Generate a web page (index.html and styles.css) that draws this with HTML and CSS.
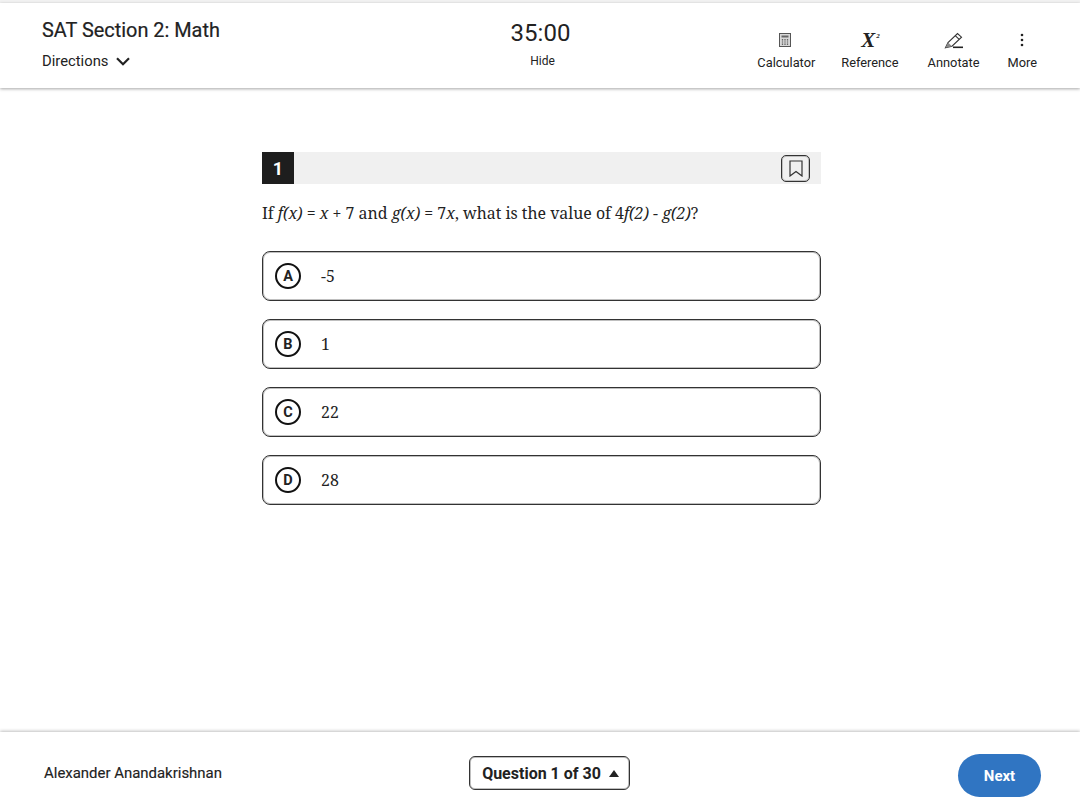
FILE: index.html
```html
<!DOCTYPE html>
<html lang="en">
<head>
<meta charset="utf-8">
<title>SAT Section 2: Math</title>
<link rel="stylesheet" href="styles.css">
</head>
<body>
<div class="page">
  <header class="topbar">
    <div class="left">
      <h1 class="section-title">SAT Section 2: Math</h1>
      <div class="directions">Directions
        <svg class="chev" width="14" height="9" viewBox="0 0 14 9"><path d="M1 1.2 7 7.2l6-6" fill="none" stroke="#222" stroke-width="2.2"/></svg>
      </div>
    </div>
    <div class="center">
      <div class="timer">35:00</div>
      <div class="hide">Hide</div>
    </div>
    <div class="tools">
      <div class="tool tool-calc">
        <svg class="tool-icon" width="24" height="24" viewBox="0 0 24 24"><rect x="5.5" y="5.5" width="11" height="13" fill="#d8d8d8" stroke="#555" stroke-width="1"/><rect x="7.5" y="7.5" width="7" height="2" fill="#666"/><path d="M8.5 11v6M11 11v6M13.5 11v6" stroke="#666" stroke-width="1.3"/><path d="M7 13h8M7 15h8" stroke="#d8d8d8" stroke-width=".8"/></svg>
        <span>Calculator</span>
      </div>
      <div class="tool tool-ref">
        <div class="tool-icon xsq"><span class="x">X</span><span class="two">2</span></div>
        <span>Reference</span>
      </div>
      <div class="tool tool-ann">
        <svg class="tool-icon" width="24" height="24" viewBox="0 0 24 24"><path d="M3.5 19.8 6 14.5 15.5 5.5l4 3.7-9.5 9zM13.2 7.7l4 3.7" fill="none" stroke="#333" stroke-width="1.1"/><path d="M3.5 19.8 6 14.5l4 3.7z" fill="#888"/><path d="M11 19.3h10" stroke="#222" stroke-width="1.6"/></svg>
        <span>Annotate</span>
      </div>
      <div class="tool tool-more">
        <svg class="tool-icon" width="24" height="24" viewBox="0 0 24 24"><circle cx="12" cy="7" r="1.3" fill="#222"/><circle cx="12" cy="12" r="1.3" fill="#222"/><circle cx="12" cy="17" r="1.3" fill="#222"/></svg>
        <span>More</span>
      </div>
    </div>
  </header>

  <main class="main">
    <section class="question">
      <div class="q-head">
        <div class="q-num">1</div>
        <div class="q-mark">
          <svg width="14" height="17" viewBox="0 0 14 17"><path d="M1 1h12v15l-6-4.6L1 16z" fill="none" stroke="#333" stroke-width="1.2"/></svg>
        </div>
      </div>
      <p class="q-text">If <i>f(x)</i> = <i>x</i> + 7 and <i>g(x)</i> = 7<i>x</i>, what is the value of 4<i>f(2)</i> - <i>g(2)</i>?</p>
      <div class="choices">
        <div class="choice"><span class="letter">A</span><span class="val">-5</span></div>
        <div class="choice"><span class="letter">B</span><span class="val">1</span></div>
        <div class="choice"><span class="letter">C</span><span class="val">22</span></div>
        <div class="choice"><span class="letter">D</span><span class="val">28</span></div>
      </div>
    </section>
  </main>

  <footer class="bottombar">
    <div class="student">Alexander Anandakrishnan</div>
    <div class="q-nav">Question 1 of 30 <span class="tri"></span></div>
    <div class="next">Next</div>
  </footer>
</div>
</body>
</html>
```
FILE: styles.css
```css
* { box-sizing: border-box; }
html, body { margin: 0; padding: 0; background: #fff; }
body { font-family: Roboto, "Liberation Sans", sans-serif; color: #222; }
.page { width: 1080px; height: 806px; display: flex; flex-direction: column; overflow: hidden; padding-top: 3px; background: #f2f2f2; }

.topbar { height: 85px; background: #fff; display: grid; grid-template-columns: 1fr 1fr 1fr; padding: 0 42px; box-shadow: 0 1px 3px rgba(0,0,0,.35); position: relative; z-index: 1; }
.left { padding-top: 15px; }
.section-title { margin: 0; font-size: 19.9px; line-height: 26px; font-weight: 400; -webkit-text-stroke: .2px #222; }
.directions { margin-top: 8px; font-size: 14.8px; line-height: 18px; display: flex; align-items: center; gap: 8px; }
.chev { margin-top: 1px; }
.center { display: flex; flex-direction: column; align-items: center; padding-top: 14px; }
.timer { font-size: 24px; line-height: 32px; margin-left: 1px; }
.hide { margin-top: 4px; margin-left: 5px; font-size: 12px; line-height: 16px; }
.tools { display: flex; justify-content: flex-end; align-items: flex-start; padding-top: 25px; gap: 26px; padding-right: 1px; }
.tool { display: flex; flex-direction: column; align-items: center; font-size: 12.8px; line-height: 16px; }
.tool-ann { margin-left: 3px; }
.tool-more { margin-left: 2px; }
.tool-icon { width: 24px; height: 24px; display: block; margin-bottom: 3px; }
.xsq { display: flex; justify-content: center; align-items: flex-start; padding: 2px 0 0 1px; font-family: "Liberation Serif", serif; font-weight: 700; font-style: italic; }
.x { font-size: 21px; line-height: 21px; }
.two { font-size: 7px; line-height: 12px; margin-left: 1px; }

.main { flex: 1; background: #fff; display: flex; justify-content: center; padding: 64px 0 0 3px; }
.question { width: 559px; }
.q-head { height: 32px; background: #f0f0f0; display: flex; justify-content: space-between; align-items: center; }
.q-num { width: 32px; height: 32px; background: #1e1e1e; color: #fff; font-weight: 700; font-size: 18px; display: flex; align-items: center; justify-content: center; }
.q-mark { width: 29px; height: 27px; margin-right: 11px; border: 1px solid #333; box-shadow: inset 0 0 0 1px rgba(0,0,0,.2); border-radius: 5px; display: flex; align-items: center; justify-content: center; }
.q-text { margin: 17px 0 0; font-family: "Noto Serif", "DejaVu Serif", "Liberation Serif", serif; font-size: 15.9px; line-height: 24px; }
.choices { display: flex; flex-direction: column; gap: 18px; margin-top: 26px; }
.choice { height: 50px; border: 1px solid #333; box-shadow: inset 0 0 0 1px rgba(0,0,0,.25); border-radius: 8px; display: flex; align-items: center; padding-left: 12px; }
.letter { width: 26px; height: 26px; border: 2px solid #111; border-radius: 50%; font-size: 14.5px; font-weight: 700; display: flex; align-items: center; justify-content: center; }
.val { margin-left: 20px; font-family: "Noto Serif", "DejaVu Serif", "Liberation Serif", serif; font-size: 15.9px; }

.bottombar { height: 74px; flex: none; background: #fff; display: grid; grid-template-columns: 425px 161px 1fr; align-items: center; padding: 8px 39px 0 44px; box-shadow: 0 -1px 3px rgba(0,0,0,.25); position: relative; }
.student { font-size: 14.95px; font-weight: 400; -webkit-text-stroke: .15px #222; }
.q-nav { height: 34px; border: 1px solid #333; box-shadow: inset 0 0 0 1px rgba(0,0,0,.25); border-radius: 6px; padding-left: 2px; font-size: 16px; font-weight: 700; display: flex; align-items: center; justify-content: center; gap: 8px; }
.tri { width: 0; height: 0; border-left: 5px solid transparent; border-right: 5px solid transparent; border-bottom: 7px solid #222; }
.next { justify-self: end; width: 83px; height: 43px; border-radius: 22px; background: #3075c2; color: #fff; font-size: 15px; font-weight: 700; display: flex; align-items: center; justify-content: center; margin-top: 4px; padding-top: 2px; }
```
